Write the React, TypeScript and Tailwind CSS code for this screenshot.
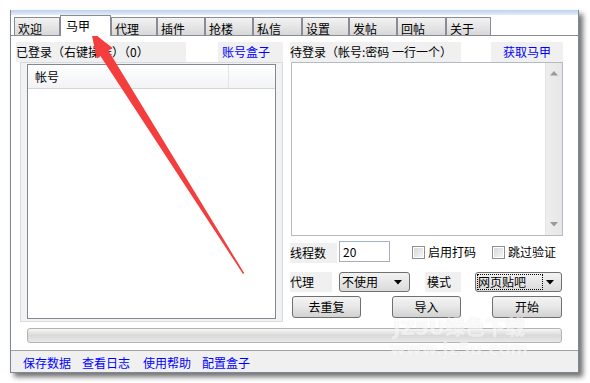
import React from "react";

const tabs = [
  { label: "欢迎", w: "w-[46px]" },
  { label: "马甲", w: "w-[51px]", active: true },
  { label: "代理", w: "w-[46px]" },
  { label: "插件", w: "w-[48px]" },
  { label: "抢楼", w: "w-[48px]" },
  { label: "私信", w: "w-[49px]" },
  { label: "设置", w: "w-[47px]" },
  { label: "发帖", w: "w-[48px]" },
  { label: "回帖", w: "w-[49px]" },
  { label: "关于", w: "w-[45px]" },
];

function Tab({ label, w, active }: { label: string; w: string; active?: boolean }) {
  if (active) {
    return (
      <div className={`${w} relative z-10 -mb-px h-[21px] shrink-0 border border-b-0 border-[#898c95] bg-white pl-[5px] pt-[3px] text-[12px] leading-[14px]`}>
        {label}
      </div>
    );
  }
  return (
    <div className={`${w} h-[18px] shrink-0 border border-b-0 border-[#898c95] bg-linear-to-b from-[#f3f3f3] to-[#d8d8d8] pl-[3px] pt-[4px] text-[12px] leading-[14px]`}>
      {label}
    </div>
  );
}

function Checkbox({ label, w }: { label: string; w: string }) {
  return (
    <div className={`${w} flex shrink-0 items-center`}>
      <div className="h-[13px] w-[13px] shrink-0 border border-[#8e8f8f] bg-white p-px">
        <div className="h-full w-full bg-linear-to-br from-[#d8d8d8] to-[#f6f6f6]" />
      </div>
      <span className="ml-[3px] text-[12px] leading-[14px] whitespace-nowrap">{label}</span>
    </div>
  );
}

function Caret() {
  return (
    <svg width="8" height="5" viewBox="0 0 8 5" className="shrink-0">
      <path d="M0 0 H8 L4 4.5 Z" fill="#000" />
    </svg>
  );
}

function Button({ label, w }: { label: string; w: string }) {
  return (
    <div className={`${w} flex h-[22px] shrink-0 items-center justify-center rounded-[3px] border border-[#707070] bg-linear-to-b from-[#f4f4f4] via-[#e7e7e7] to-[#d2d2d2] text-[12px] leading-[14px]`}>
      {label}
    </div>
  );
}

export default function App() {
  return (
    <div className="relative h-[383px] w-[590px] overflow-hidden bg-white pt-[10px] pl-[10px] font-['Noto_Sans_CJK_SC','Liberation_Sans',sans-serif] text-black">
      <div className="flex h-[363px] w-[569px] flex-col border-x border-b border-[#7d8795] bg-white shadow-[4px_4px_5px_rgba(0,0,0,0.55)]">
        {/* top frame strip */}
        <div className="h-[5px] bg-linear-to-b from-[#bcd3ec] to-[#e4edf7]" />

        {/* tabs */}
        <div className="flex h-[20px] items-end pl-[3px]">
          {tabs.map((t) => (
            <Tab key={t.label} {...t} />
          ))}
        </div>

        {/* panel */}
        <div className="h-[315px] border-t border-[#898c95] bg-white">
          <div className="flex items-start pt-[6px] pl-[5px]">
            {/* left column */}
            <div className="w-[267px] shrink-0">
              <div className="flex h-[20px]">
                <div className="w-[170px] shrink-0 bg-[#f0f0f0] text-[12px] leading-[20px]">已登录（右键操作）（0）</div>
                <div className="ml-[32px] w-[65px] shrink-0 bg-[#f0f0f0] pl-[4px] text-[12px] leading-[20px] text-[#0000ff]">账号盒子</div>
              </div>
              <div className="ml-[4px] flex h-[260px] w-[263px] flex-col border border-[#d5dbe3] bg-[#f2f2f2] pt-px pr-[6px] pb-[2px] pl-[6px]">
                <div className="flex flex-1 flex-col border border-[#828790] bg-white">
                  <div className="flex h-[24px] border-b border-[#d5d5d5] bg-linear-to-b from-white to-[#f2f3f5]">
                    <div className="w-[201px] border-r border-[#e2e3e5] pl-[7px] text-[12px] leading-[23px]">帐号</div>
                  </div>
                </div>
              </div>
            </div>

            {/* right column */}
            <div className="ml-[7px] w-[273px] shrink-0">
              <div className="flex h-[20px]">
                <div className="w-[171px] shrink-0 bg-[#f0f0f0] text-[12px] leading-[20px]">待登录（帐号:密码 一行一个）</div>
                <div className="ml-auto w-[72px] shrink-0 bg-[#f0f0f0] text-center text-[12px] leading-[20px] text-[#0000ff]">获取马甲</div>
              </div>
              <div className="ml-px flex h-[174px] w-[272px] justify-end border border-[#b6bac2] bg-white">
                <div className="flex w-[17px] flex-col items-center justify-between border-l border-[#e4e4e4] bg-linear-to-r from-[#eeeeee] to-[#e6e6e6] py-[8px]">
                  <svg width="8" height="5" viewBox="0 0 8 5">
                    <path d="M0 4.5 H8 L4 0 Z" fill="#9a9a9a" />
                  </svg>
                  <svg width="8" height="5" viewBox="0 0 8 5">
                    <path d="M0 0 H8 L4 4.5 Z" fill="#9a9a9a" />
                  </svg>
                </div>
              </div>

              <div className="mt-[5px] flex h-[22px] items-center">
                <div className="h-[20px] w-[47px] shrink-0 self-end bg-[#f0f0f0] text-[12px] leading-[20px]">线程数</div>
                <div className="ml-[2px] h-[21px] w-[51px] shrink-0 self-start border border-[#abadb3] border-t-[#a4b4c8] bg-white pl-[3px] text-[12px] leading-[19px]">20</div>
                <div className="ml-[22px] flex shrink-0">
                  <Checkbox label="启用打码" w="w-[80px]" />
                  <Checkbox label="跳过验证" w="w-[68px]" />
                </div>
              </div>

              <div className="mt-[9px] flex h-[20px] items-center">
                <div className="h-[20px] w-[42px] shrink-0 bg-[#f0f0f0] text-[12px] leading-[20px]">代理</div>
                <div className="ml-[7px] flex h-[20px] w-[71px] shrink-0 items-center justify-between rounded-[3px] border border-[#707070] bg-linear-to-b from-[#f3f3f3] to-[#dadada] pr-[7px] pl-[2px] text-[12px] leading-[14px]">
                  <span>不使用</span>
                  <Caret />
                </div>
                <div className="ml-[15px] h-[20px] w-[36px] shrink-0 bg-[#f0f0f0] pl-[2px] text-[12px] leading-[20px]">模式</div>
                <div className="ml-[14px] flex h-[20px] w-[87px] shrink-0 items-center justify-between rounded-[3px] border border-[#707070] bg-linear-to-b from-[#f3f3f3] to-[#dadada] pr-[7px] pl-px text-[12px] leading-[14px]">
                  <span className="h-[16px] w-[66px] border border-dotted border-black text-[12px] leading-[14px]">网页贴吧</span>
                  <Caret />
                </div>
              </div>

              <div className="mt-[4px] flex">
                <div className="ml-[2px]">
                  <Button label="去重复" w="w-[69px]" />
                </div>
                <div className="ml-[31px]">
                  <Button label="导入" w="w-[69px]" />
                </div>
                <div className="ml-[31px]">
                  <Button label="开始" w="w-[70px]" />
                </div>
              </div>
            </div>
          </div>

          {/* progress bar */}
          <div className="mt-[6px] ml-[16px] h-[15px] w-[535px] rounded-[3px] border border-[#b2b2b2] bg-linear-to-b from-[#f6f6f6] via-[#d9d9d9] to-[#e9e9e9]" />
        </div>

        {/* footer */}
        <div className="flex h-[22px] items-center border-t border-[#a0a0a0] bg-[#f0f0f0] pt-[3px] pl-[12px] text-[12px] leading-[14px] text-[#0000ff]">
          <span>保存数据</span>
          <span className="ml-[11px]">查看日志</span>
          <span className="ml-[13px]">使用帮助</span>
          <span className="ml-[11px]">配置盒子</span>
        </div>
      </div>

      {/* watermark */}
      <div className="pointer-events-none absolute top-[318px] left-[390px] flex flex-col items-center gap-[3px] font-['DejaVu_Sans','Noto_Sans_CJK_SC',sans-serif] font-black text-[#f8f8f8] opacity-60 [text-shadow:0_0_1px_#d6d6d6]">
        <span className="text-[20px] leading-[20px]">JZ5U绿色下载</span>
        <span className="text-[17px] leading-[17px]">www.jz5u.com</span>
      </div>

      {/* red arrow annotation */}
      <svg className="pointer-events-none absolute top-0 left-0" width="590" height="383" viewBox="0 0 590 383">
        <polygon
          points="91,31 112.5,48 108.5,50.8 244.3,273.2 243,274 100.4,56 96.8,58.5"
          fill="#f43d3d"
        />
      </svg>
    </div>
  );
}
